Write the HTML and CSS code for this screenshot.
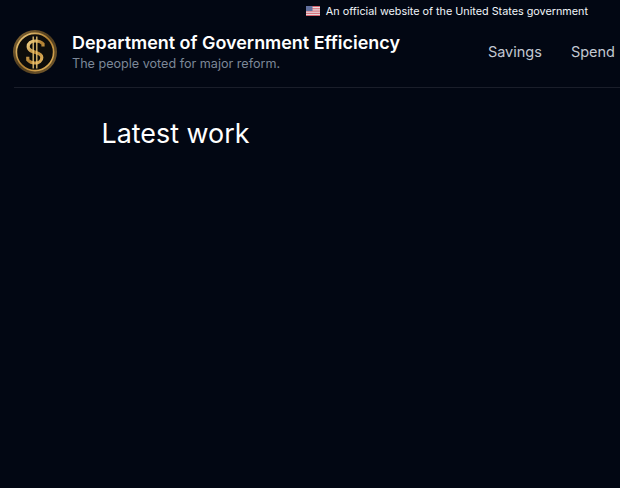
FILE: index.html
```html
<!DOCTYPE html>
<html lang="en">
<head>
<meta charset="utf-8">
<title>Department of Government Efficiency</title>
<link rel="stylesheet" href="styles.css">
</head>
<body>
<div class="banner">
  <svg class="flag" viewBox="0 0 14 10" width="14" height="10" aria-hidden="true">
    <rect width="14" height="10" fill="#e8e6ea"/>
    <g fill="#d4606c">
      <rect width="14" height="1.1"/><rect y="2.25" width="14" height="1.1"/><rect y="4.5" width="14" height="1.1"/>
      <rect y="6.75" width="14" height="1.1"/><rect y="8.9" width="14" height="1.1"/>
    </g>
    <rect width="6.5" height="5" fill="#62709e"/>
  </svg>
  <span>An official website of the United States government</span>
</div>
<header class="header">
  <div class="brand">
    <svg class="logo" viewBox="0 0 44 44" width="44" height="44" aria-hidden="true">
      <defs>
        <linearGradient id="gold" x1="0" y1="0" x2="1" y2="1">
          <stop offset="0" stop-color="#f5d58a"/>
          <stop offset=".5" stop-color="#b07e30"/>
          <stop offset="1" stop-color="#eabb62"/>
        </linearGradient>
        <linearGradient id="rim" x1="0" y1="0" x2="1" y2="1">
          <stop offset="0" stop-color="#8a6a35"/>
          <stop offset=".5" stop-color="#4f3c1e"/>
          <stop offset="1" stop-color="#7c5f2f"/>
        </linearGradient>
      </defs>
      <circle cx="22" cy="22" r="22" fill="url(#rim)"/>
      <circle cx="22" cy="22" r="18.6" fill="#0e0d0b" stroke="url(#gold)" stroke-width="1.6"/>
      <path d="M30 16.5L30 13.8C28 11.8 25.5 11 22.5 11C18 11 15.2 13.2 15.2 16.6C15.2 20.4 18.8 21.4 22.4 22.4C25.6 23.3 28.8 24.2 28.8 27.4C28.8 30.8 25.8 33 22 33C19 33 16.6 32 14.8 30L14.8 26.8" fill="none" stroke="url(#gold)" stroke-width="3.2"/>
      <path d="M20.2 6.5V38.5M23.8 6.5V38.5" fill="none" stroke="#eac677" stroke-width="1.3"/>
    </svg>
    <div class="titles">
      <div class="title">Department of Government Efficiency</div>
      <div class="subtitle">The people voted for major reform.</div>
    </div>
  </div>
  <nav class="nav">
    <a href="#">Savings</a>
    <a href="#">Spend</a>
  </nav>
</header>
<main class="main">
  <h2 class="heading">Latest work</h2>
</main>
</body>
</html>
```
FILE: styles.css
```css
* { box-sizing: border-box; }
html, body { height: 100%; }
body {
  margin: 0;
  background: #020713;
  color: #fff;
  font-family: Inter, "Liberation Sans", sans-serif;
  overflow: hidden;
}
.banner {
  display: flex;
  align-items: center;
  justify-content: flex-end;
  gap: 6px;
  height: 22px;
  padding-right: 32px;
  font-size: 10.8px;
  color: #f1f5f9;
}
.flag { flex: none; }
.header {
  display: flex;
  align-items: center;
  justify-content: space-between;
  height: 66px;
  margin-left: 14px;
  padding-right: 5px;
  border-bottom: 1px solid #1a1e2a;
}
.brand { display: flex; align-items: center; gap: 15px; margin-left: -1px; margin-bottom: 5px; }
.logo { flex: none; }
.title { font-size: 17.95px; line-height: 24px; font-weight: 600; color: #fff; }
.subtitle { font-size: 12.6px; line-height: 18px; color: #7c8798; }
.nav { display: flex; gap: 29px; margin-bottom: 5px; }
.nav a { font-size: 14.5px; line-height: 22px; color: #c2c8d2; text-decoration: none; }
.main { padding: 27px 0 0 101.5px; }
.heading { margin: 0; font-size: 26.9px; line-height: 36px; font-weight: 400; color: #fff; }
```
